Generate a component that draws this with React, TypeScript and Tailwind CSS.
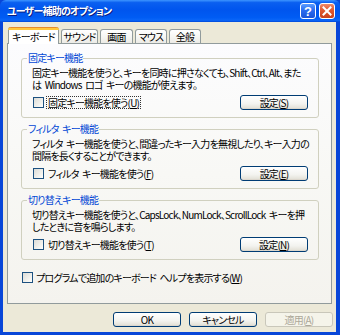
import React from "react";

const F =
  "font-['Noto_Sans_CJK_JP','Noto_Sans',sans-serif] [font-feature-settings:'palt'] tracking-[-0.8px] [word-spacing:2px]";

function U({ c }: { c: string }) {
  return <span className="underline underline-offset-[1px] decoration-1">{c}</span>;
}

function XPButton({ children, disabled }: { children: React.ReactNode; disabled?: boolean }) {
  return (
    <div
      className={`w-[68px] h-[15px] rounded-[3px] border flex items-center justify-center text-[10px] leading-none ${
        disabled
          ? "border-[#c9c7ba] text-[#aca899] bg-[#f5f4ea]"
          : "border-[#003c74] text-black bg-[linear-gradient(180deg,#ffffff_0%,#f3f3ef_60%,#e5e3da_90%,#d6d0c5_100%)]"
      }`}
    >
      {children}
    </div>
  );
}

function Checkbox() {
  return (
    <div className="w-[11px] h-[11px] border border-[#1c5180] bg-[linear-gradient(135deg,#dcdcd7_0%,#f4f4f0_70%,#ffffff_100%)] shrink-0" />
  );
}

function Group({
  title,
  line1,
  line2,
  label,
  btn,
  focus,
}: {
  title: string;
  line1: string;
  line2: string;
  label: React.ReactNode;
  btn: React.ReactNode;
  focus?: boolean;
}) {
  return (
    <fieldset className="border border-[#d0d0bf] rounded-[3px] pb-[7px] min-w-0">
      <legend className="ml-[5px] px-[1px] text-[#0046d5] text-[10px] leading-[12px]">{title}</legend>
      <div className="pt-[3px] pl-[10px] pr-[8px] text-[10px] leading-[12px] text-black whitespace-nowrap">
        <div>{line1}</div>
        <div>{line2}</div>
      </div>
      <div className="mt-[4px] flex items-center h-[15px] pl-[11px] pr-[10px]">
        <Checkbox />
        <span
          className={`ml-[2px] px-[1px] text-[10px] leading-[11px] border border-dotted ${
            focus ? "border-[#333]" : "border-transparent"
          }`}
        >
          {label}
        </span>
        <div className="ml-auto">
          <XPButton>{btn}</XPButton>
        </div>
      </div>
    </fieldset>
  );
}

function Tab({ label, w, active }: { label: string; w: string; active?: boolean }) {
  if (active) {
    return (
      <div
        className={`${w} h-[17px] relative z-10 -mb-[1px] bg-white border-x border-[#919b9c] rounded-t-[3px] flex flex-col`}
      >
        <div className="h-[3px] -mx-[1px] rounded-t-[3px] bg-[linear-gradient(180deg,#e68b2c_0%,#e68b2c_33%,#ffc83c_34%,#ffc83c_100%)]" />
        <div className="flex-1 flex items-center justify-center text-[10px] leading-none text-black pb-[1px] whitespace-nowrap">
          {label}
        </div>
      </div>
    );
  }
  return (
    <div
      className={`${w} h-[14px] border-x border-t border-[#919b9c] rounded-t-[3px] bg-[linear-gradient(180deg,#ffffff_0%,#f7f7f4_50%,#ecebe6_100%)] flex items-center justify-center text-[10px] leading-none text-black whitespace-nowrap`}
    >
      {label}
    </div>
  );
}

export default function App() {
  return (
    <div className={`w-[340px] h-[335px] flex flex-col bg-[#0846d8] ${F}`}>
      {/* Title bar */}
      <div className="h-[22px] shrink-0 flex items-center pl-[7px] pr-[5px] rounded-t-[6px] bg-[linear-gradient(180deg,#3d95ff_0%,#0a5ff0_12%,#0055ee_45%,#005cf4_80%,#0a66f8_92%,#0048d8_100%)]">
        <span className="text-white font-bold text-[10px] leading-none [text-shadow:1px_1px_0_#0a1e80]">
          ユーザー補助のオプション
        </span>
        <div className="ml-auto flex items-center gap-[3px]">
          <div className="w-[16px] h-[16px] rounded-[3px] border border-white bg-[linear-gradient(180deg,#5a9cff_0%,#2a6cf0_45%,#1a54d8_100%)] flex items-center justify-center">
            <span className="text-white font-bold text-[13px] leading-none tracking-normal font-['Liberation_Sans',sans-serif]">
              ?
            </span>
          </div>
          <div className="w-[16px] h-[16px] rounded-[3px] border border-white bg-[linear-gradient(180deg,#ee8b6c_0%,#e0582f_45%,#c8411c_100%)] flex items-center justify-center">
            <svg width="10" height="10" viewBox="0 0 10 10">
              <path d="M1.5 1.5 L8.5 8.5 M8.5 1.5 L1.5 8.5" stroke="white" strokeWidth="2" strokeLinecap="square" />
            </svg>
          </div>
        </div>
      </div>

      {/* Client area */}
      <div className="flex-1 flex flex-col ml-[3px] mr-[4px] mb-[3px] bg-[#ece9d8] pl-[4px] pr-[4px]">
        {/* Tabs */}
        <div className="h-[21px] shrink-0 flex items-end pl-[1px] gap-[2px]">
          <Tab label="キーボード" w="w-[51px]" active />
          <Tab label="サウンド" w="w-[37px]" />
          <Tab label="画面" w="w-[33px]" />
          <Tab label="マウス" w="w-[32px]" />
          <Tab label="全般" w="w-[32px]" />
        </div>

        {/* Panel */}
        <div className="h-[261px] shrink-0 border border-[#919b9c] bg-[linear-gradient(180deg,#fcfcfe_0%,#f8f8f5_50%,#f4f3ee_100%)] pt-[8px] pl-[13px] pr-[12px] flex flex-col gap-[5px]">
          <Group
            title="固定キー機能"
            line1="固定キー機能を使うと、キーを同時に押さなくても、Shift、Ctrl、Alt、また"
            line2="は Windows ロゴ キーの機能が使えます。"
            label={
              <>
                固定キー機能を使う(<U c="U" />)
              </>
            }
            btn={
              <>
                設定(<U c="S" />)
              </>
            }
            focus
          />
          <Group
            title="フィルタ キー機能"
            line1="フィルタ キー機能を使うと、間違ったキー入力を無視したり、キー入力の"
            line2="間隔を長くすることができます。"
            label={
              <>
                フィルタ キー機能を使う(<U c="F" />)
              </>
            }
            btn={
              <>
                設定(<U c="E" />)
              </>
            }
          />
          <Group
            title="切り替えキー機能"
            line1="切り替えキー機能を使うと、CapsLock、NumLock、ScrollLock キーを押"
            line2="したときに音を鳴らします。"
            label={
              <>
                切り替えキー機能を使う(<U c="T" />)
              </>
            }
            btn={
              <>
                設定(<U c="N" />)
              </>
            }
          />
          <div className="mt-[6px] flex items-center h-[13px] pl-[1px]">
            <Checkbox />
            <span className="ml-[2px] px-[1px] text-[10px] leading-[11px] text-black">
              プログラムで追加のキーボード ヘルプを表示する(<U c="W" />)
            </span>
          </div>
        </div>

        {/* Buttons */}
        <div className="mt-[8px] flex justify-end gap-[8px] -mr-[1px]">
          <XPButton>OK</XPButton>
          <XPButton>キャンセル</XPButton>
          <XPButton disabled>
            適用(<U c="A" />)
          </XPButton>
        </div>
      </div>
    </div>
  );
}
